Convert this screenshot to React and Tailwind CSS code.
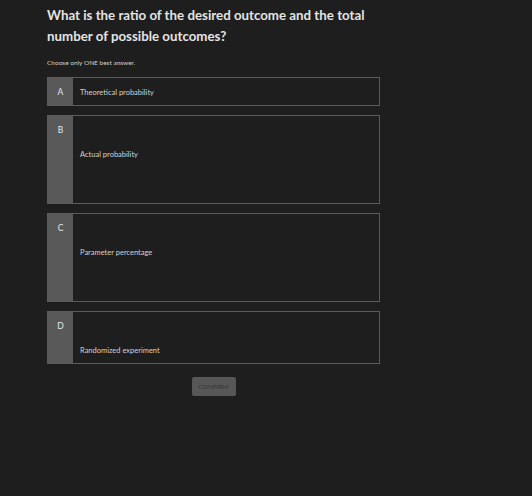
const options = [
  { letter: "A", text: "Theoretical probability", body: "h-[29px]", pad: "pt-[10px]" },
  { letter: "B", text: "Actual probability", body: "h-[89px]", pad: "pt-[34px]" },
  { letter: "C", text: "Parameter percentage", body: "h-[89px]", pad: "pt-[34px]" },
  { letter: "D", text: "Randomized experiment", body: "h-[53px]", pad: "pt-[34px]" },
];

export default function App() {
  return (
    <div className="min-h-[496px] w-full bg-[#1e1e1e] font-['Lato',sans-serif]">
      <div className="w-[380px] pl-[47px] pt-[5px]">
        <h1 className="w-[335px] text-[13.3px] font-bold leading-[21px] text-[#e4e4e4]">
          What is the ratio of the desired outcome and the total number of possible outcomes?
        </h1>
        <p className="mt-[11px] text-[6.5px] leading-[10px] text-[#d0d0d0]">Choose only ONE best answer.</p>

        <div className="mt-[9px] flex flex-col gap-[9px]">
          {options.map((o) => (
            <div key={o.letter} className={`flex border border-[#5b5b5b] ${o.body}`}>
              <div className="w-[25px] shrink-0 bg-[#595959] pt-[8px] text-center text-[8.5px] leading-[12px] text-[#e8e8e8]">
                {o.letter}
              </div>
              <div className={`flex-1 bg-[#1e1e1e] pl-[7px] ${o.pad} text-[7.5px] leading-[10px] text-[#d2d2d2]`}>
                {o.text}
              </div>
            </div>
          ))}
        </div>

        <div className="mt-[13px] flex justify-center">
          <button className="h-[19px] w-[44px] rounded-[2px] bg-[#575757] text-[6.5px] text-[#333333]">
            CONFIRM
          </button>
        </div>
      </div>
    </div>
  );
}
